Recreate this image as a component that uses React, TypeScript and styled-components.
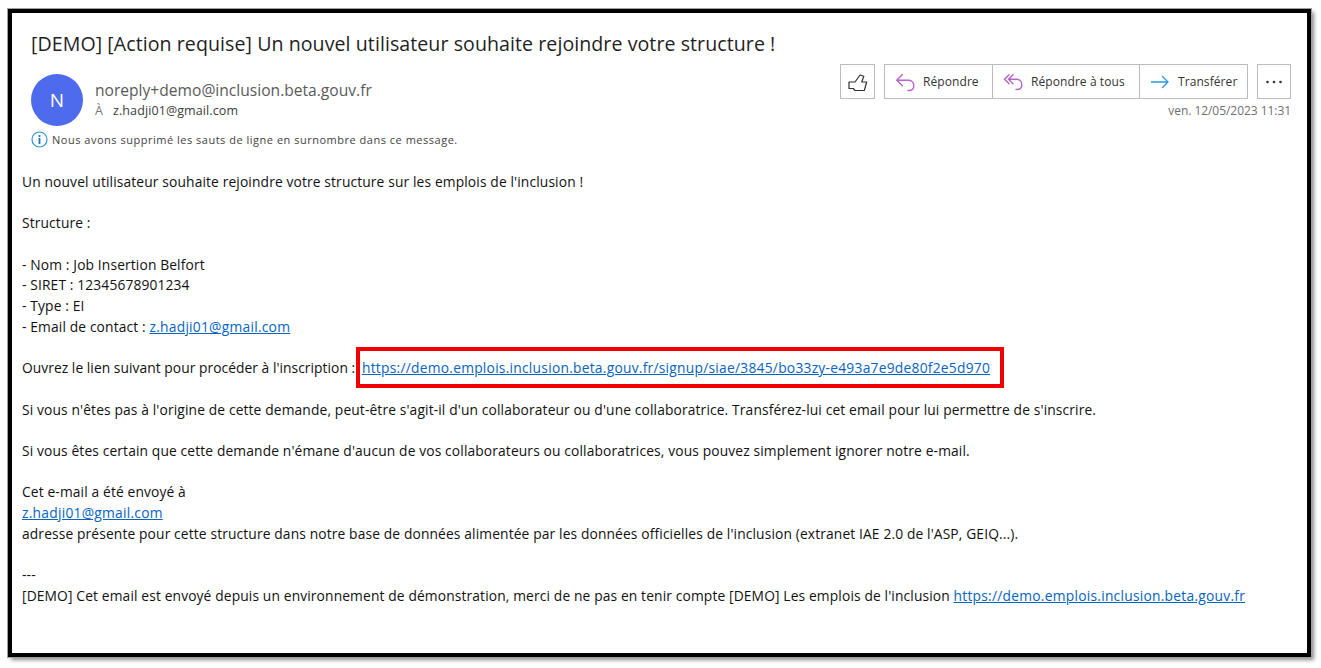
import { createGlobalStyle } from 'styled-components'
import styled from 'styled-components'

const GlobalStyle = createGlobalStyle`
  html, body {
    margin: 0;
    padding: 0;
    background: #ffffff;
    font-family: 'Open Sans', 'Noto Sans', 'Liberation Sans', sans-serif;
  }
`

const Page = styled.div`
  width: 1321px;
  height: 668px;
  padding: 9px 0 0 8px;
  box-sizing: border-box;
  overflow: hidden;
`

const Frame = styled.main`
  width: 1303px;
  height: 648px;
  box-sizing: border-box;
  border: 4px solid #000000;
  outline: 1px solid #a0a0a0;
  box-shadow: 3px 3px 4px rgba(0, 0, 0, 0.45);
  padding: 16px 16px 0 10px;
`

const Subject = styled.h1`
  margin: 0 0 0 9px;
  height: 30px;
  font-size: 19.6px;
  line-height: 30px;
  font-weight: 400;
  color: #1f1f1f;
  letter-spacing: 0.06px;
  white-space: nowrap;
`

const HeaderRow = styled.div`
  display: flex;
  justify-content: space-between;
  margin: 5px 0 0 9px;
  height: 66px;
`

const Sender = styled.div`
  display: flex;
  gap: 12px;
  padding-top: 10px;
`

const Avatar = styled.div`
  width: 52px;
  height: 52px;
  border-radius: 50%;
  background: #4f6bed;
  color: #ffffff;
  font-size: 19px;
  display: flex;
  align-items: center;
  justify-content: center;
`

const SenderText = styled.div`
  padding-top: 5px;
`

const From = styled.div`
  font-size: 15.6px;
  line-height: 22px;
  color: #5a5a5a;
`

const Recipient = styled.div`
  font-size: 12.5px;
  line-height: 20px;
  color: #3c3c3c;
  display: flex;
  gap: 10px;
  letter-spacing: 0.1px;

  span:first-child {
    color: #777777;
  }
`

const Actions = styled.div`
  display: flex;
  flex-direction: column;
  align-items: flex-end;
`

const ActionRow = styled.div`
  display: flex;
  gap: 9px;
`

const ActionGroup = styled.div`
  display: flex;
  border: 1px solid #bcbcbc;
  height: 33px;
`

const IconButton = styled.button<{ $width: number }>`
  width: ${(p) => p.$width}px;
  height: 35px;
  box-sizing: border-box;
  border: 1px solid #bcbcbc;
  background: #ffffff;
  padding: 0;
  display: flex;
  align-items: center;
  justify-content: center;
`

const ActionButton = styled.button<{ $width: number }>`
  width: ${(p) => p.$width}px;
  border: 0;
  border-left: 1px solid #bcbcbc;
  background: #ffffff;
  padding: 0 0 0 10px;
  display: flex;
  align-items: center;
  gap: 8px;
  font-family: inherit;
  font-size: 12px;
  color: #333333;
  letter-spacing: 0.08px;
  white-space: nowrap;

  &:first-child {
    border-left: 0;
  }
`

const DateLine = styled.div`
  margin-top: 3px;
  font-size: 12px;
  line-height: 18px;
  color: #6f6f6f;
  letter-spacing: -0.05px;
`

const Notice = styled.div`
  display: flex;
  align-items: center;
  gap: 4px;
  margin: -1px 0 0 9px;
  height: 20px;
  font-size: 11px;
  color: #444444;
  letter-spacing: 0.51px;
`

const Body = styled.div`
  margin-top: 23px;
  font-size: 13.8px;
  line-height: 20.7px;
  color: #111111;
  letter-spacing: 0.13px;
  white-space: nowrap;
`

const Paragraph = styled.p`
  margin: 0 0 20.7px;
`

const Mail = styled.a`
  color: #0563c1;
  text-decoration: underline;
  letter-spacing: 0.25px;
`

const LinkLead = styled.span`
  letter-spacing: 0.05px;
`

const Highlight = styled.span`
  position: relative;
  margin-left: 3px;

  &::after {
    content: '';
    position: absolute;
    left: -6px;
    right: -14px;
    top: -11px;
    bottom: -11px;
    border: 4px solid #f00000;
  }
`

const stroke = { fill: 'none', strokeLinecap: 'round', strokeLinejoin: 'round' } as const

function ThumbIcon() {
  return (
    <svg width="20" height="20" viewBox="0 0 20 20" {...stroke} stroke="#333333" strokeWidth="1.2">
      <path d="M1 10h6l5-7 3.8 1.3L13.7 10h5l-2.4 8.5H7l-1.7-2H1z" />
    </svg>
  )
}

function ReplyIcon() {
  return (
    <svg width="20" height="20" viewBox="0 0 20 20" {...stroke} stroke="#b565c5" strokeWidth="1.4">
      <path d="M7.5 2.5 1.7 8.3l5.8 5.5M1.7 8.3H14a5.2 5.2 0 0 1 4.8 5.2c0 3-2 5-4.8 5h-1" />
    </svg>
  )
}

function ReplyAllIcon() {
  return (
    <svg width="20" height="20" viewBox="0 0 20 20" {...stroke} stroke="#b565c5" strokeWidth="1.4">
      <path d="M6 2.8 1.5 7.3 6 11.8M10 2.8 5.5 7.3l4.5 4.5M5.5 7.3H14a5.2 5.2 0 0 1 4.8 5.2c0 3-2 5-4.8 5h-1" />
    </svg>
  )
}

function ForwardIcon() {
  return (
    <svg width="20" height="20" viewBox="0 0 20 20" {...stroke} stroke="#2f96e0" strokeWidth="1.3">
      <path d="M1.5 10H18M12.5 4.5 18 10l-5.5 5.5" />
    </svg>
  )
}

function MoreIcon() {
  return (
    <svg width="20" height="20" viewBox="0 0 20 20" fill="#333333">
      <circle cx="3.5" cy="10" r="1.3" />
      <circle cx="10" cy="10" r="1.3" />
      <circle cx="16.5" cy="10" r="1.3" />
    </svg>
  )
}

function InfoIcon() {
  return (
    <svg width="17" height="17" viewBox="0 0 17 17">
      <circle cx="8.5" cy="8.5" r="7.5" fill="none" stroke="#2f96d8" strokeWidth="1.2" />
      <circle cx="8.5" cy="5" r="1.1" fill="#1c74b8" />
      <rect x="7.6" y="7" width="1.8" height="6" fill="#1c74b8" />
    </svg>
  )
}

export default function App() {
  return (
    <Page>
      <GlobalStyle />
      <Frame>
        <Subject>[DEMO] [Action requise] Un nouvel utilisateur souhaite rejoindre votre structure !</Subject>
        <HeaderRow>
          <Sender>
            <Avatar>N</Avatar>
            <SenderText>
              <From>noreply+demo@inclusion.beta.gouv.fr</From>
              <Recipient>
                <span>À</span>
                <span>z.hadji01@gmail.com</span>
              </Recipient>
            </SenderText>
          </Sender>
          <Actions>
            <ActionRow>
              <IconButton $width={35} aria-label="J'aime">
                <ThumbIcon />
              </IconButton>
              <ActionGroup>
                <ActionButton $width={107}>
                  <ReplyIcon />
                  Répondre
                </ActionButton>
                <ActionButton $width={147}>
                  <ReplyAllIcon />
                  Répondre à tous
                </ActionButton>
                <ActionButton $width={108}>
                  <ForwardIcon />
                  Transférer
                </ActionButton>
              </ActionGroup>
              <IconButton $width={34} aria-label="Plus">
                <MoreIcon />
              </IconButton>
            </ActionRow>
            <DateLine>ven. 12/05/2023 11:31</DateLine>
          </Actions>
        </HeaderRow>
        <Notice>
          <InfoIcon />
          Nous avons supprimé les sauts de ligne en surnombre dans ce message.
        </Notice>
        <Body>
          <Paragraph>Un nouvel utilisateur souhaite rejoindre votre structure sur les emplois de l'inclusion !</Paragraph>
          <Paragraph>Structure :</Paragraph>
          <Paragraph>
            - Nom : Job Insertion Belfort
            <br />
            - SIRET : 12345678901234
            <br />
            - Type : EI
            <br />
            - Email de contact : <Mail href="#">z.hadji01@gmail.com</Mail>
          </Paragraph>
          <Paragraph>
            <LinkLead>Ouvrez le lien suivant pour procéder à l'inscription :</LinkLead>{' '}
            <Highlight>
              <Mail href="#">https://demo.emplois.inclusion.beta.gouv.fr/signup/siae/3845/bo33zy-e493a7e9de80f2e5d970</Mail>
            </Highlight>
          </Paragraph>
          <Paragraph>
            Si vous n'êtes pas à l'origine de cette demande, peut-être s'agit-il d'un collaborateur ou d'une collaboratrice. Transférez-lui cet email pour lui permettre de s'inscrire.
          </Paragraph>
          <Paragraph>
            Si vous êtes certain que cette demande n'émane d'aucun de vos collaborateurs ou collaboratrices, vous pouvez simplement ignorer notre e-mail.
          </Paragraph>
          <Paragraph>
            Cet e-mail a été envoyé à
            <br />
            <Mail href="#">z.hadji01@gmail.com</Mail>
            <br />
            adresse présente pour cette structure dans notre base de données alimentée par les données officielles de l'inclusion (extranet IAE 2.0 de l'ASP, GEIQ...).
          </Paragraph>
          <Paragraph>
            ---
            <br />
            [DEMO] Cet email est envoyé depuis un environnement de démonstration, merci de ne pas en tenir compte [DEMO] Les emplois de l'inclusion{' '}
            <Mail href="#">https://demo.emplois.inclusion.beta.gouv.fr</Mail>
          </Paragraph>
        </Body>
      </Frame>
    </Page>
  )
}
